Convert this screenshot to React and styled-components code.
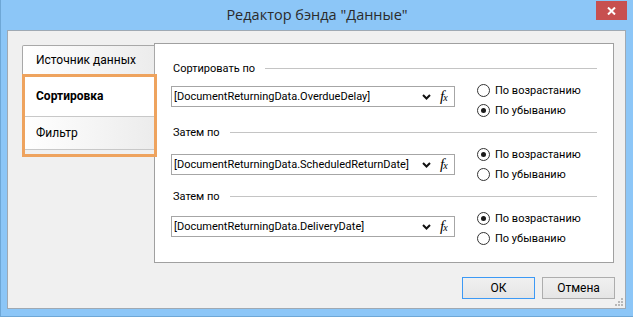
import styled, { createGlobalStyle } from "styled-components";

const GlobalStyle = createGlobalStyle`
html, body { margin: 0; padding: 0; }
body {
  font-family: Roboto, 'Noto Sans', sans-serif;
  font-size: 11px;
  color: #000;
  background: #8cc6f7;
}
`;

const Window = styled.div`
width: 633px;
height: 317px;
box-sizing: border-box;
background: #8cc6f7;
border-left: 1px solid #6ea7d6;
border-bottom: 1px solid #6ea7d6;
display: flex;
flex-direction: column;
`;

const TitleBar = styled.div`
height: 30px;
display: grid;
grid-template-columns: 1fr auto 1fr;
align-items: start;
`;

const Title = styled.div`
grid-column: 2;
font-family: 'Open Sans', sans-serif;
font-size: 14.5px;
line-height: 30px;
color: #2b2b2b;
`;

const CloseButton = styled.div`
grid-column: 3;
justify-self: end;
margin: 1px 6px 0 0;
width: 31px;
height: 19px;
background: #c75050;
color: #fff;
display: flex;
align-items: center;
justify-content: center;
`;

const Client = styled.div`
margin: 0 7px 0 6px;
height: 279px;
box-sizing: border-box;
border: 1px solid #9fa9b3;
background: #f0f0f0;
display: flex;
flex-direction: column;
`;

const Body = styled.div`
display: flex;
padding: 12px 10px 0 14px;
`;

const TabList = styled.div`
position: relative;
width: 133px;
margin-top: 2px;
margin-right: -1px;
z-index: 1;
display: flex;
flex-direction: column;
`;

const Tab = styled.div`
height: ${(p) => p.h}px;
box-sizing: border-box;
padding-left: 13px;
display: flex;
align-items: center;
font-size: 12px;
font-weight: ${(p) => (p.active ? "bold" : "normal")};
background: ${(p) => (p.active ? "#fff" : "linear-gradient(to right, #ffffff, #ececec)")};
border-left: 1px solid #a8a8a8;
border-top: ${(p) => (p.first ? "1px solid #a8a8a8" : "none")};
border-bottom: 1px solid #c8c8c8;
border-right: ${(p) => (p.active ? "none" : "1px solid #a8a8a8")};
border-top-left-radius: ${(p) => (p.first ? "2px" : "0")};
`;

const Highlight = styled.div`
position: absolute;
left: 0;
top: 29px;
width: 135px;
height: 83px;
box-sizing: border-box;
border: 3px solid #eea35e;
pointer-events: none;
`;

const Panel = styled.div`
width: 460px;
height: 220px;
box-sizing: border-box;
border: 1px solid #a0a0a0;
background: #fff;
padding: 15px 16px 0 16px;
display: flex;
flex-direction: column;
`;

const Section = styled.div`
display: flex;
flex-direction: column;
margin-bottom: ${(p) => p.mb}px;
`;

const GroupHeader = styled.div`
display: flex;
align-items: center;
gap: 10px;
height: 18px;
padding-left: 2px;
&::after {
  content: "";
  flex: 1;
  height: 1px;
  background: #c4c4c4;
}
`;

const Row = styled.div`
display: flex;
align-items: flex-start;
margin-top: ${(p) => p.mt}px;
`;

const Combo = styled.div`
width: 284px;
height: 21px;
box-sizing: border-box;
border: 1px solid #a6a6a6;
background: #fff;
display: flex;
align-items: center;
padding-left: 2px;
margin-top: ${(p) => p.mt}px;
`;

const ComboText = styled.span`
flex: 1;
white-space: nowrap;
overflow: hidden;
`;

const Chevron = styled.svg`
width: 9px;
height: 6px;
margin-right: 9px;
`;

const Fx = styled.span`
font-family: 'Liberation Serif', serif;
font-style: italic;
font-size: 15px;
line-height: 15px;
width: 14px;
letter-spacing: -1px;
& small { font-size: 10px; }
`;

const RadioGroup = styled.div`
display: flex;
flex-direction: column;
gap: 4px;
margin: ${(p) => p.mt}px 0 0 22px;
`;

const RadioRow = styled.label`
display: flex;
align-items: center;
gap: 5px;
height: 16px;
`;

const RadioCircle = styled.span`
width: 13px;
height: 13px;
box-sizing: border-box;
border-radius: 50%;
border: 1px solid #333;
background: #fff;
display: flex;
align-items: center;
justify-content: center;
&::after {
  content: "";
  width: 5px;
  height: 5px;
  border-radius: 50%;
  background: ${(p) => (p.checked ? "#1a1a1a" : "transparent")};
}
`;

const Footer = styled.div`
display: flex;
justify-content: flex-end;
gap: 7px;
padding: 14px 10px 0 0;
position: relative;
flex: 1;
`;

const Button = styled.div`
width: 73px;
height: 22px;
box-sizing: border-box;
border: 1px solid ${(p) => (p.primary ? "#3c99f5" : "#adadad")};
background: linear-gradient(#f0f0f0, #e5e5e5);
font-size: 12px;
display: flex;
align-items: center;
justify-content: center;
`;

const Grip = styled.svg`
position: absolute;
right: 2px;
bottom: 2px;
`;

const ChevronIcon = () => (
  <Chevron viewBox="0 0 9 6">
    <path d="M1 1 L4.5 4.5 L8 1" stroke="#111" strokeWidth="2" fill="none" />
  </Chevron>
);

const SortRow = ({ field, asc, mt, comboMt, radioMt }) => (
  <Row mt={mt}>
    <Combo mt={comboMt}>
      <ComboText>{field}</ComboText>
      <ChevronIcon />
      <Fx>f<small>x</small></Fx>
    </Combo>
    <RadioGroup mt={radioMt}>
      <RadioRow>
        <RadioCircle checked={asc} />
        По возрастанию
      </RadioRow>
      <RadioRow>
        <RadioCircle checked={!asc} />
        По убыванию
      </RadioRow>
    </RadioGroup>
  </Row>
);

export default function App() {
  return (
    <Window>
      <GlobalStyle />
      <TitleBar>
        <Title>Редактор бэнда "Данные"</Title>
        <CloseButton>
          <svg width="9" height="8" viewBox="0 0 9 8">
            <path d="M1 0.5 L8 7.5 M8 0.5 L1 7.5" stroke="#fff" strokeWidth="2" />
          </svg>
        </CloseButton>
      </TitleBar>
      <Client>
        <Body>
          <TabList>
            <Tab first h={30}>Источник данных</Tab>
            <Tab active h={42}>Сортировка</Tab>
            <Tab h={33}>Фильтр</Tab>
            <Highlight />
          </TabList>
          <Panel>
            <Section mb={5}>
              <GroupHeader>Сортировать по</GroupHeader>
              <SortRow field="[DocumentReturningData.OverdueDelay]" asc={false} mt={2} comboMt={7} radioMt={3} />
            </Section>
            <Section mb={5}>
              <GroupHeader>Затем по</GroupHeader>
              <SortRow field="[DocumentReturningData.ScheduledReturnDate]" asc mt={5} comboMt={8} radioMt={0} />
            </Section>
            <Section>
              <GroupHeader>Затем по</GroupHeader>
              <SortRow field="[DocumentReturningData.DeliveryDate]" asc mt={5} comboMt={6} radioMt={0} />
            </Section>
          </Panel>
        </Body>
        <Footer>
          <Button primary>ОК</Button>
          <Button>Отмена</Button>
          <Grip width="8" height="8" viewBox="0 0 8 8">
            <rect x="6" y="0" width="2" height="2" fill="#b8b8b8" />
            <rect x="3" y="3" width="2" height="2" fill="#b8b8b8" />
            <rect x="6" y="3" width="2" height="2" fill="#b8b8b8" />
            <rect x="0" y="6" width="2" height="2" fill="#b8b8b8" />
            <rect x="3" y="6" width="2" height="2" fill="#b8b8b8" />
            <rect x="6" y="6" width="2" height="2" fill="#b8b8b8" />
          </Grip>
        </Footer>
      </Client>
    </Window>
  );
}
